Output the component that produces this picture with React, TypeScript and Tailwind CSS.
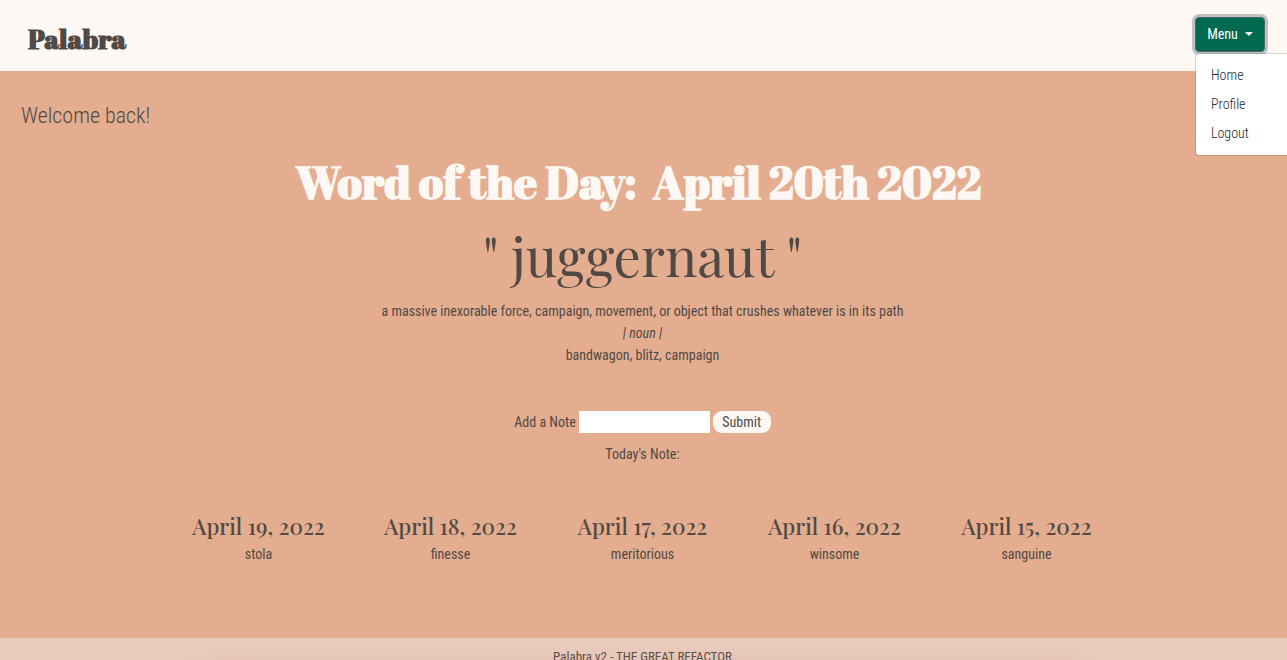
import { useState } from "react";

const pastWords = [
  { date: "April 19, 2022", word: "stola" },
  { date: "April 18, 2022", word: "finesse" },
  { date: "April 17, 2022", word: "meritorious" },
  { date: "April 16, 2022", word: "winsome" },
  { date: "April 15, 2022", word: "sanguine" },
];

const menuItems = ["Home", "Profile", "Logout"];

function Header() {
  const [open, setOpen] = useState(true);
  return (
    <header className="flex h-[71px] shrink-0 items-start justify-between bg-[#fef8f4] pl-7 pr-[22px] pt-[17px]">
      <a
        href="#home"
        className="pt-[3px] font-['Abril_Fatface','Liberation_Serif',serif] text-[27px] leading-[38px] font-bold"
      >
        Palabra
      </a>
      <div className="relative">
        <button
          type="button"
          aria-expanded={open}
          onClick={() => setOpen(!open)}
          className="flex h-[35px] w-[70px] items-center justify-center gap-[7px] rounded-[4px] border border-[#4d6660] bg-[#00694f] pb-[2px] text-[14px] font-normal text-white ring-3 ring-[#bfc1c4]"
        >
          Menu
          <span className="border-x-4 border-t-4 border-x-transparent border-t-white" />
        </button>
        {open && (
          <nav className="absolute top-[36px] left-0 z-10 flex w-40 flex-col rounded-[4px] border border-[#00000026] bg-white bg-clip-padding py-[7px] text-[14px] leading-[21px] font-light text-[#212529]">
            {menuItems.map((item) => (
              <a key={item} href={"#" + item.toLowerCase()} className="px-[15px] py-1">
                {item}
              </a>
            ))}
          </nav>
        )}
      </div>
    </header>
  );
}

function WordOfTheDay() {
  return (
    <section className="flex flex-col items-center text-center">
      <h1 className="font-['Abril_Fatface','Liberation_Serif',serif] text-[45px] leading-[58px] font-bold whitespace-pre text-[#fef8f4]">
        Word of the Day:{"  "}April 20th 2022{" "}
      </h1>
      <h2 className="mt-[10px] font-['Playfair_Display','Liberation_Serif',serif] text-[54px] leading-[70px] font-normal">
        " juggernaut "
      </h2>
      <p className="mt-[9px]">
        a massive inexorable force, campaign, movement, or object that crushes whatever is in its path
      </p>
      <p className="italic">| noun |</p>
      <p>bandwagon, blitz, campaign</p>
    </section>
  );
}

function NoteForm() {
  return (
    <section className="mt-[45px] flex flex-col items-center">
      <form className="flex items-center gap-[3px]" onSubmit={(e) => e.preventDefault()}>
        <label htmlFor="note">Add a Note</label>
        <input id="note" type="text" className="h-[22px] w-[131px] bg-white px-1 outline-none" />
        <button type="submit" className="h-[22px] w-[58px] rounded-[9px] bg-[#fef8f4] pb-px">
          Submit
        </button>
      </form>
      <p className="mt-[10px]">Today's Note:</p>
    </section>
  );
}

export default function App() {
  return (
    <div className="flex h-screen flex-col overflow-hidden bg-[#e4ad8f] font-['Roboto_Condensed','Liberation_Sans_Narrow','Roboto',sans-serif] text-[14px] leading-[22px] font-normal text-[#504945]">
      <Header />
      <main className="flex min-h-[567px] shrink-0 flex-col pr-[2px]">
        <p className="mt-[31px] pl-[21px] text-[22px] leading-[28px] font-light">Welcome back!</p>
        <div className="mt-[23px]">
          <WordOfTheDay />
        </div>
        <NoteForm />
        <section className="mx-auto mt-[45px] grid w-full max-w-[960px] grid-cols-5 text-center">
          {pastWords.map(({ date, word }) => (
            <article key={date}>
              <h3 className="mb-px font-['Playfair_Display','Liberation_Serif',serif] text-[22px] leading-[32px] font-medium whitespace-nowrap">
                {date}
              </h3>
              <p>{word}</p>
            </article>
          ))}
        </section>
      </main>
      <footer className="flex h-16 shrink-0 flex-col items-center overflow-hidden bg-[#ebccbe] pt-[8px] pr-[2px]">
        <p className="text-[13px]">Palabra v2 - THE GREAT REFACTOR</p>
        <div className="mt-5 h-8 w-[70%] shrink-0 shadow-[0_0_50px_#c69c8a]" />
      </footer>
    </div>
  );
}
